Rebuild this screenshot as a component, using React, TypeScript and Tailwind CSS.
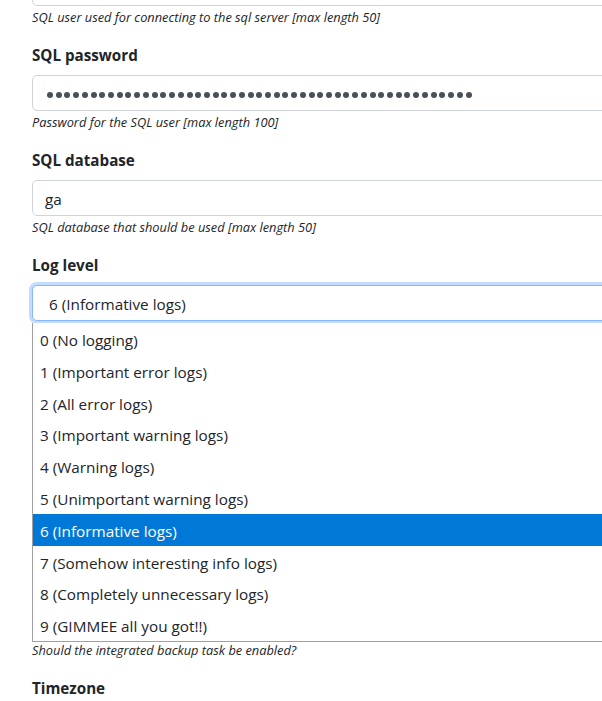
import React from "react";

const LOG_LEVELS = [
  "0 (No logging)",
  "1 (Important error logs)",
  "2 (All error logs)",
  "3 (Important warning logs)",
  "4 (Warning logs)",
  "5 (Unimportant warning logs)",
  "6 (Informative logs)",
  "7 (Somehow interesting info logs)",
  "8 (Completely unnecessary logs)",
  "9 (GIMMEE all you got!!)",
];

function Help({ children }: { children: React.ReactNode }) {
  return <div className="mt-[2px] text-[12.8px] italic leading-[19px]">{children}</div>;
}

function Label({ children }: { children: React.ReactNode }) {
  return <div className="mb-2 text-[15.2px] font-bold leading-6">{children}</div>;
}

function TextBox({ value }: { value: string }) {
  return (
    <div className="flex h-[36px] items-center rounded-[5px] border border-[#ced4da] bg-white px-3 pt-[3px] text-[15.3px] text-[#212529]">
      {value}
    </div>
  );
}

function PasswordBox({ length }: { length: number }) {
  return (
    <div className="flex h-[36px] items-center rounded-[5px] border border-[#ced4da] bg-white pl-[14px] pt-[4px]">
      {Array.from({ length }).map((_, i) => (
        <span key={i} className="mr-[2.72px] h-[6px] w-[6px] shrink-0 rounded-full bg-[#495057]" />
      ))}
    </div>
  );
}

export default function App() {
  return (
    <div className="h-[701px] w-full overflow-hidden bg-white font-['Segoe_UI','Open_Sans',sans-serif] text-[#212529]">
      <div className="-mt-[30px] w-[720px] pl-[32px]">
        {/* SQL user */}
        <div className="mb-4">
          <TextBox value="" />
          <Help>SQL user used for connecting to the sql server [max length 50]</Help>
        </div>

        <div className="mb-4">
          <Label>SQL password</Label>
          <PasswordBox length={49} />
          <Help>Password for the SQL user [max length 100]</Help>
        </div>

        <div className="mb-4">
          <Label>SQL database</Label>
          <TextBox value="ga" />
          <Help>SQL database that should be used [max length 50]</Help>
        </div>

        <div className="mb-4">
          <Label>Log level</Label>
          <div className="relative">
            <div className="flex h-[36px] items-center rounded-[5px] border border-[#86b7fe] bg-white pl-4 pt-[3px] text-[15.3px] shadow-[0_0_0_3px_rgba(13,110,253,0.25)]">
              6 (Informative logs)
            </div>
            {/* open native list */}
            <div className="absolute left-0 top-[38px] z-10 w-[700px] border border-t-0 border-[#a0a0a0] bg-white">
              {LOG_LEVELS.map((lvl, i) => (
                <div
                  key={lvl}
                  className={`flex h-[31.8px] items-center pl-[7px] pt-[3px] text-[15.3px] ${
                    i === 6 ? "bg-[#0078d7] text-white" : "text-[#212529]"
                  }`}
                >
                  {lvl}
                </div>
              ))}
            </div>
          </div>
          {/* fields covered by the open list */}
          <div className="h-[317.5px]" />
          <Help>Should the integrated backup task be enabled?</Help>
        </div>

        <div className="mb-4">
          <Label>Timezone</Label>
          <TextBox value="Europe/Berlin" />
        </div>
      </div>
    </div>
  );
}
